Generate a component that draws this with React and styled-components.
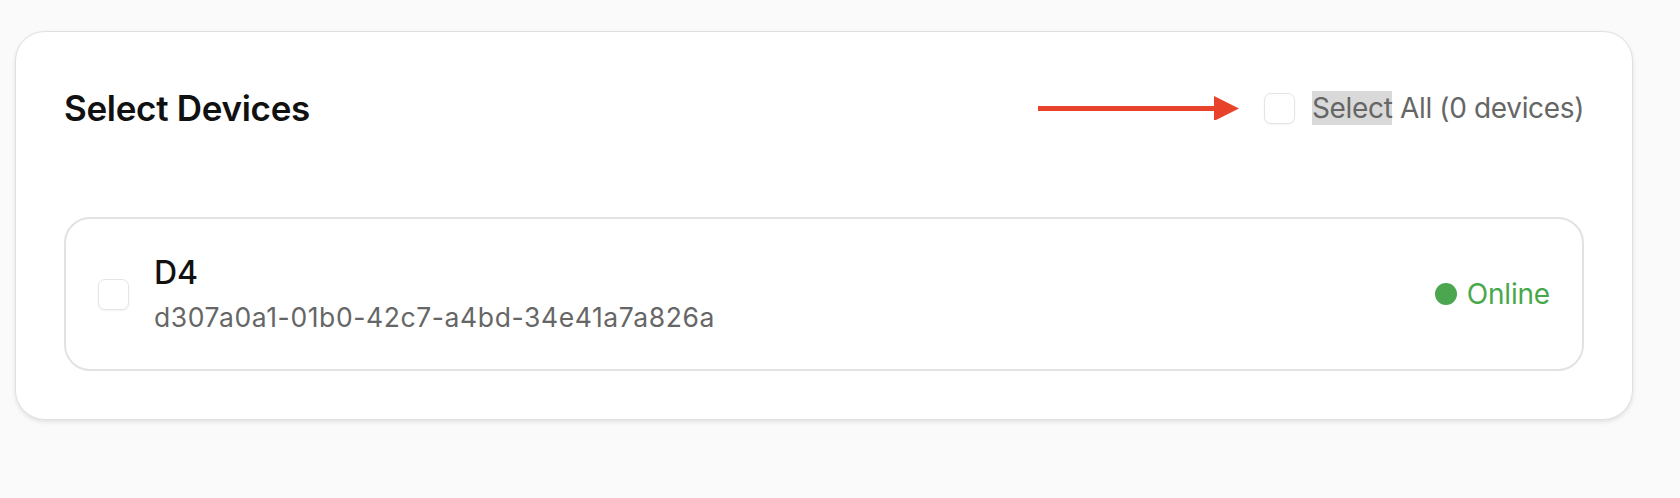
import React from "react";
import styled, { createGlobalStyle } from "styled-components";

const GlobalStyle = createGlobalStyle`
  html, body {
    margin: 0;
    padding: 0;
    background: #fafafa;
    font-family: Inter, "Noto Sans", "Liberation Sans", sans-serif;
  }
`;

const Page = styled.div`
  padding: 31px 47px 0 15px;
  min-height: 100vh;
  box-sizing: border-box;
`;

const Card = styled.section`
  background: #fff;
  border: 1px solid #e0e0e0;
  border-radius: 30px;
  box-shadow: 0 2px 4px rgba(0, 0, 0, 0.1);
  padding: 48px;
`;

const Header = styled.div`
  display: flex;
  align-items: center;
  justify-content: space-between;
  height: 56px;
  margin-bottom: 81px;
`;

const Title = styled.h2`
  margin: 0;
  font-size: 35px;
  font-weight: 600;
  color: #111;
  letter-spacing: -0.3px;
`;

const Actions = styled.div`
  display: flex;
  align-items: center;
`;

const Arrow = styled.svg`
  display: block;
  margin-right: 25px;
`;

const Box = styled.span`
  display: inline-block;
  flex-shrink: 0;
  width: ${(p) => p.$size}px;
  height: ${(p) => p.$size}px;
  box-sizing: border-box;
  border: 1.5px solid #e4e4e4;
  border-radius: 7px;
  background: #fff;
  box-shadow: 0 1px 2px rgba(0, 0, 0, 0.05);
`;

const Label = styled.span`
  margin-left: 17px;
  font-size: 28px;
  letter-spacing: -0.35px;
  line-height: 40px;
  color: #666;
`;

const Highlight = styled.span`
  background: #d9d9d9;
`;

const DeviceRow = styled.div`
  display: flex;
  align-items: center;
  height: 154px;
  box-sizing: border-box;
  padding: 0 32px;
  border: 2px solid #e2e2e2;
  border-radius: 26px;
`;

const Info = styled.div`
  flex: 1;
  display: flex;
  flex-direction: column;
  margin-left: 25px;
`;

const Name = styled.div`
  font-size: 32px;
  font-weight: 500;
  color: #111;
  line-height: 38px;
`;

const Uuid = styled.div`
  margin-top: 7px;
  font-size: 26.5px;
  letter-spacing: 0.6px;
  color: #666;
  line-height: 36px;
`;

const Status = styled.div`
  display: flex;
  align-items: center;
  gap: 10px;
  font-size: 28px;
  letter-spacing: -0.2px;
  color: #48a84c;
`;

const Dot = styled.span`
  width: 22px;
  height: 22px;
  border-radius: 50%;
  background: #4ba64f;
`;

export default function App() {
  return (
    <>
      <GlobalStyle />
      <Page>
        <Card>
          <Header>
            <Title>Select Devices</Title>
            <Actions>
              <Arrow width="201" height="24" viewBox="0 0 201 24">
                <rect x="0" y="10" width="180" height="5" fill="#e8432a" />
                <polygon points="176,0 201,12.5 176,25" fill="#e8432a" />
              </Arrow>
              <Box $size={31} />
              <Label>
                <Highlight>Select</Highlight> All (0 devices)
              </Label>
            </Actions>
          </Header>
          <DeviceRow>
            <Box $size={31} />
            <Info>
              <Name>D4</Name>
              <Uuid>d307a0a1-01b0-42c7-a4bd-34e41a7a826a</Uuid>
            </Info>
            <Status>
              <Dot />
              Online
            </Status>
          </DeviceRow>
        </Card>
      </Page>
    </>
  );
}
